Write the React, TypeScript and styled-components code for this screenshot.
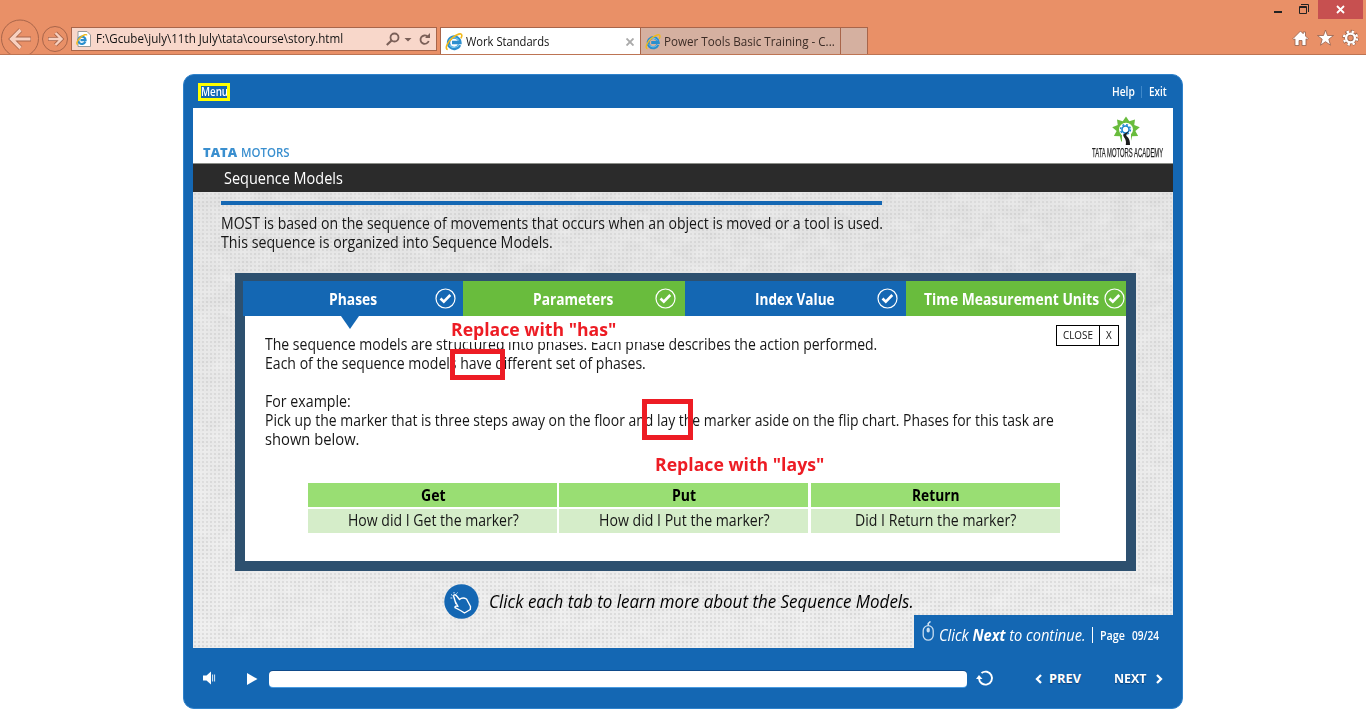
import React, { useLayoutEffect, useRef, useState } from "react";
import styled, { createGlobalStyle } from "styled-components";

const BLUE = "#1467b3";
const GREEN = "#69bc3d";
const RED = "#ed1c24";

const Global = createGlobalStyle`
  * { box-sizing: border-box; }
  body { margin: 0; background: #fff; font-family: "Open Sans", "Noto Sans", sans-serif; overflow: hidden; }
`;

/* ---- text fitted to a measured column width ---- */
const FitBox = styled.span<{ $w: number }>`
  display: block;
  flex: none;
  width: ${(p) => p.$w}px;
  white-space: pre;
`;
const FitInner = styled.span`
  display: inline-block;
  transform-origin: 0 50%;
`;
function Fit({ w, children }: { w: number; children: React.ReactNode }) {
  const ref = useRef<HTMLSpanElement>(null);
  const [k, setK] = useState(1);
  useLayoutEffect(() => {
    if (ref.current) setK(w / ref.current.offsetWidth);
  }, [w]);
  return (
    <FitBox $w={w}>
      <FitInner ref={ref} style={{ transform: `scaleX(${k})` }}>{children}</FitInner>
    </FitBox>
  );
}

/* ---- browser chrome ---- */
const Page = styled.div`
  width: 1366px;
  height: 728px;
  display: flex;
  flex-direction: column;
  align-items: center;
  background: #fff;
`;
const Chrome = styled.header`
  width: 100%;
  height: 55px;
  background: #e99067;
  border-bottom: 1px solid #bd7453;
  display: flex;
  align-items: flex-end;
  color: #111;
  font-size: 12.4px;
  overflow: hidden;
`;
const NavButtons = styled.svg`
  width: 71px;
  height: 54px;
  flex: none;
`;
const Address = styled.div`
  width: 366px;
  height: 24px;
  margin-bottom: 3px;
  background: #f8d7ca;
  border: 1px solid #a8654a;
  display: flex;
  align-items: center;
  padding-left: 4px;
  line-height: 22px;
`;
const AddressText = styled.div`
  margin: 0 0 0 5px;
  flex: 1;
`;
const AddressIcons = styled.svg`
  position: relative;
  left: -1px;
`;
const TabStrip = styled.div`
  height: 27px;
  margin-left: 3px;
  display: flex;
  border: 1px solid #a8654a;
  border-bottom: 0;
`;
const BrowserTab = styled.div<{ $w: number; $active?: boolean }>`
  width: ${(p) => p.$w}px;
  background: ${(p) => (p.$active ? "#fff" : "#d5b0a0")};
  color: ${(p) => (p.$active ? "#111" : "#3c2c26")};
  border-right: 1px solid #a8654a;
  display: flex;
  align-items: center;
  gap: 3px;
  padding: 1px 5px 0 4px;
  &:last-child { border-right: 0; }
`;
const TabClose = styled.svg`
  margin-left: auto;
  margin-right: 1px;
`;
const WindowSide = styled.div`
  margin-left: auto;
  width: 110px;
  height: 54px;
  display: flex;
  flex-direction: column;
  justify-content: space-between;
  align-items: flex-end;
`;
const WindowButtons = styled.div`
  display: flex;
  align-items: center;
  height: 19px;
  margin-right: 3px;
`;
const CloseWindow = styled.div`
  width: 45px;
  height: 19px;
  margin-left: 8px;
  background: #c75050;
  display: grid;
  place-items: center;
`;
const Tools = styled.div`
  display: flex;
  gap: 8px;
  margin: 0 7px 7px 0;
`;

const IELogo = ({ size = 18 }: { size?: number }) => (
  <svg width={size} height={size} viewBox="0 0 17 17">
    <path d="M13.7 11.3A5.4 5.4 0 1 1 14.1 9H6.6" fill="none" stroke="#2b8fce" strokeWidth="3.2" />
    <path d="M13.2 11.2A5.200 5.200 0 0 1 4.200 11M4 7.500a5 5 0 0 1 9-.5" fill="none" stroke="#7ccbf0" strokeWidth="1" />
    <path d="M2.600 15.600C-.6 15 2.200 8.800 7 4.600 11.200 1 15.600-.4 15.900 2.100c.1 1-.3 2-.9 3" fill="none" stroke="#f0b91c" strokeWidth="1.500" />
  </svg>
);

/* ---- course player ---- */
const Player = styled.main`
  width: 1000px;
  height: 635px;
  margin-top: 19px;
  background: ${BLUE};
  border: 1px solid #2f82cb;
  border-radius: 11px;
  padding: 0 9px;
`;
const PlayerTop = styled.div`
  height: 33px;
  padding: 0 6px 0 5px;
  display: flex;
  align-items: center;
  justify-content: space-between;
  color: #fff;
  font-size: 11.6px;
  font-weight: 600;
`;
const MenuMark = styled.div`
  width: 32px;
  height: 18px;
  border: 3px solid #ffff00;
  line-height: 12px;
  overflow: hidden;
`;
const TopLinks = styled.div`
  display: flex;
  align-items: center;
  gap: 7px;
`;
const LinkDivider = styled.i`
  width: 1px;
  height: 12px;
  margin-left: -1px;
  background: #3f88c9;
`;
const Slide = styled.section`
  height: 540px;
  display: flex;
  flex-direction: column;
  position: relative;
  background-color: #e7e7e7;
`;
const Texture = styled.svg`
  position: absolute;
  inset: 0;
`;
const BrandBar = styled.div`
  height: 56px;
  background: #fff;
  border-bottom: 1px solid #8b8d88;
  display: flex;
  justify-content: space-between;
  align-items: flex-end;
  padding: 0 10px 0 10px;
  position: relative;
`;
const Tata = styled.div`
  display: flex;
  gap: 4px;
  color: #3a8fcf;
  font-size: 12.6px;
  line-height: 14px;
  font-weight: 600;
  margin-bottom: 3px;
`;
const Heavy = styled.b`
  font-weight: 800;
`;
const Academy = styled.div`
  width: 71px;
  display: flex;
  flex-direction: column;
  align-items: center;
  color: #222;
  font-family: "Liberation Sans", sans-serif;
  font-size: 13.5px;
  line-height: 13px;
  margin-bottom: 4px;
  -webkit-text-stroke: 0.25px #222;
  svg { margin-right: 3px; }
`;
const TitleBar = styled.h1`
  height: 28px;
  margin: 0;
  padding-left: 31px;
  background: #2b2b2b;
  color: #fff;
  font-size: 15.7px;
  font-weight: 400;
  line-height: 29px;
  position: relative;
`;
const Intro = styled.div`
  margin: 9px 0 0 28px;
  width: 661px;
  border-top: 4px solid ${BLUE};
  padding-top: 9px;
  color: #161616;
  font-size: 15.7px;
  line-height: 19px;
  position: relative;
`;
const Panel = styled.div`
  width: 901px;
  height: 298px;
  margin: 21px 0 0 42px;
  border: 10px solid #2d506f;
  border-top-width: 8px;
  background: #fff;
  position: relative;
`;
const Tabs = styled.div`
  display: flex;
  margin-left: -2px;
  height: 35px;
`;
const Tab = styled.div<{ $w: number; $green?: boolean; $left: number; $check: number }>`
  width: ${(p) => p.$w}px;
  background: ${(p) => (p.$green ? GREEN : BLUE)};
  color: #fff;
  font-size: 15.3px;
  font-weight: 700;
  line-height: 36px;
  display: flex;
  justify-content: space-between;
  padding-left: ${(p) => p.$left}px;
  padding-right: ${(p) => p.$check}px;
  svg { margin-top: 6.5px; flex: none; }
`;
const Pointer = styled.svg`
  position: absolute;
  left: 96px;
  top: 35px;
`;
const Body = styled.div`
  padding: 19px 0 0 20px;
  color: #161616;
  font-size: 15.7px;
  line-height: 19px;
`;
const Gap = styled.div`
  height: 19px;
`;
const CloseBox = styled.div`
  position: absolute;
  right: 7px;
  top: 44px;
  height: 21px;
  display: flex;
  border: 1px solid #000;
  color: #111;
  font-size: 11.5px;
  line-height: 18px;
`;
const CloseCell = styled.div<{ $w: number; $pad: number }>`
  width: ${(p) => p.$w}px;
  padding-left: ${(p) => p.$pad}px;
  & + & { border-left: 1px solid #000; }
`;
const Grid = styled.div`
  display: grid;
  grid-template-columns: repeat(3, 249px);
  gap: 2px 2.4px;
  margin: 34px 0 0 43px;
`;
const Cell = styled.div<{ $head?: boolean }>`
  height: 24px;
  background: ${(p) => (p.$head ? "#99de73" : "#d5edc9")};
  color: ${(p) => (p.$head ? "#000" : "#161616")};
  font-weight: ${(p) => (p.$head ? 700 : 400)};
  font-size: ${(p) => (p.$head ? 15.2 : 15.7)}px;
  line-height: ${(p) => (p.$head ? 24 : 23)}px;
  display: flex;
  justify-content: center;
  padding-left: 1px;
`;
const Note = styled.div<{ $x: number; $y: number; $w: number; $h: number }>`
  position: absolute;
  left: ${(p) => p.$x}px;
  top: ${(p) => p.$y}px;
  width: ${(p) => p.$w}px;
  height: ${(p) => p.$h}px;
  padding-left: 1px;
  background: #fff;
  color: ${RED};
  font-size: 18.4px;
  line-height: 22px;
  font-weight: 700;
`;
const Mark = styled.div<{ $x: number; $y: number; $w: number; $h: number }>`
  position: absolute;
  left: ${(p) => p.$x}px;
  top: ${(p) => p.$y}px;
  width: ${(p) => p.$w}px;
  height: ${(p) => p.$h}px;
  border: 5px solid ${RED};
`;
const Hint = styled.div`
  display: flex;
  align-items: center;
  gap: 10px;
  margin: 12px 0 0 251px;
  height: 36px;
  font-size: 18.2px;
  font-style: italic;
  color: #000;
  position: relative;
`;
const NextHint = styled.div`
  position: absolute;
  right: 0;
  bottom: 0;
  width: 259px;
  height: 33px;
  background: ${BLUE};
  color: #fff;
  display: flex;
  align-items: center;
  padding-left: 8px;
`;
const NextText = styled.div`
  margin: 6px 0 0 4px;
  font-size: 16px;
  font-style: italic;
`;
const Bar = styled.i`
  width: 1px;
  height: 16px;
  margin: 7px 7px 0 6px;
  background: #fff;
`;
const PageNo = styled.div`
  display: flex;
  gap: 7px;
  font-size: 11.6px;
  font-weight: 600;
  margin-top: 8px;
`;
const Controls = styled.div`
  height: 60px;
  display: flex;
  align-items: center;
  color: #fff;
  font-size: 12.8px;
  font-weight: 700;
  padding: 0 9px 0 9px;
`;
const PlayIcon = styled.svg`
  margin: 1px 0 0 30px;
`;
const Seek = styled.div`
  width: 698px;
  height: 16px;
  margin: 2px 9px 0 11px;
  background: #fff;
  border-radius: 4px;
  box-shadow: 0 -1px 0 #0e4a8a, 0 1px 0 #4a9be0;
`;
const NavButton = styled.div<{ $gap: number; $left: number }>`
  display: flex;
  align-items: center;
  gap: ${(p) => p.$gap}px;
  margin-left: ${(p) => p.$left}px;
  text-shadow: 0 1px 1px #0b3f75;
  svg { margin-top: 2px; }
`;

const Check = () => (
  <svg width="21" height="21" viewBox="0 0 21 21">
    <circle cx="10.500" cy="10.500" r="9.500" fill="none" stroke="#fff" strokeWidth="1.200" />
    <path d="M5.500 10.500l3.300 3.200 6.500-6.700" fill="none" stroke="#fff" strokeWidth="2.600" />
  </svg>
);

const star = Array.from({ length: 18 }, (_, i) => {
  const r = i % 2 ? 0.68 : 1;
  const a = (i * Math.PI) / 9 - Math.PI / 2;
  return `${14 + 14 * r * Math.cos(a)},${13.5 + 13 * r * Math.sin(a)}`;
}).join(" ");

const AcademyLogo = () => (
  <svg width="28" height="30" viewBox="0 0 28 30">
    <polygon points={star} fill={GREEN} />
    <ellipse cx="14" cy="13.500" rx="7" ry="6.800" fill="#fff" />
    <path d="M10 18h9v12h-9z" fill="#fff" />
    <circle cx="13.500" cy="13.500" r="3.500" fill="none" stroke="#1c86d1" strokeWidth="1.600" />
    <circle cx="13.500" cy="13.500" r="4.900" fill="none" stroke="#1c86d1" strokeWidth="1.500" strokeDasharray="1.924 1.924" />
    <path d="M17.500 14.500c-2 2.500-6 2.500-6.300 5 .5 2.200 3.600 3.500 2.600 9.500h4.200c0-4-.7-6.500-3-8.500-1.800-1.700.8-3 2.500-6z" fill="#1c1c1c" />
  </svg>
);

const TABS = [
  { label: "Phases", w: 220, text: 48, left: 86, check: 7 },
  { label: "Parameters", w: 222, text: 80, left: 70, check: 9, green: true },
  { label: "Index Value", w: 221, text: 80, left: 70, check: 8 },
  { label: "Time Measurement Units", w: 220, text: 175, left: 18, check: 1, green: true },
];

export default function App() {
  return (
    <Page>
      <Global />
      <Chrome>
        <NavButtons viewBox="0 0 71 54">
          <g fill="none" stroke="#a8654a">
            <circle cx="20" cy="38.500" r="18.500" />
            <circle cx="55" cy="39" r="12.500" />
          </g>
          <g fill="none" stroke="#a8654a" strokeWidth="4.800">
            <path d="M31 39H12M20.500 30L11.500 39l9 9" />
            <path d="M48 39h13M55.500 33l6 6-6 6" strokeWidth="4" />
          </g>
          <g fill="none" stroke="#f8d0bf" strokeWidth="3.200">
            <path d="M30.500 39H12M20.500 30L11.500 39l9 9" />
            <path d="M48.500 39h12M55.500 33l6 6-6 6" strokeWidth="2.400" />
          </g>
        </NavButtons>
        <Address>
          <svg width="15" height="17" viewBox="0 0 15 17">
            <path d="M2 .5h9L14.500 4v11.500H2z" fill="#fff" stroke="#999" />
            <g transform="translate(0 3) scale(.68)">
              <path d="M13.700 11.300A5.400 5.400 0 1 1 14.100 9H6.600" fill="none" stroke="#2b8fce" strokeWidth="3.200" />
              <path d="M2.600 15.600C-.6 15 2.200 8.800 7 4.600 11.200 1 15.600-.4 15.900 2.100" fill="none" stroke="#f0b91c" strokeWidth="2" />
            </g>
          </svg>
          <AddressText><Fit w={247}>F:\Gcube\july\11th July\tata\course\story.html</Fit></AddressText>
          <AddressIcons width="50" height="16" viewBox="0 0 50 16">
            <g fill="none" stroke="#7b6058" strokeWidth="1.800">
              <circle cx="9.500" cy="6.500" r="4" />
              <path d="M6.500 9.500L1.800 14" strokeWidth="2.200" />
              <path d="M42.500 5.500A4.200 4.200 0 1 0 43.700 10" />
            </g>
            <path d="M19.500 7h7L23 10.500zM40 7h5V2z" fill="#7b6058" />
          </AddressIcons>
        </Address>
        <TabStrip>
          <BrowserTab $w={200} $active>
            <IELogo />
            <Fit w={83}>Work Standards</Fit>
            <TabClose width="8" height="8" viewBox="0 0 8 8"><path d="M.5.5l7 7m0-7l-7 7" stroke="#aaa" strokeWidth="1.900" /></TabClose>
          </BrowserTab>
          <BrowserTab $w={200}>
            <IELogo />
            <Fit w={171}>Power Tools Basic Training - C...</Fit>
          </BrowserTab>
          <BrowserTab $w={26} />
        </TabStrip>
        <WindowSide>
          <WindowButtons>
            <svg width="36" height="19" viewBox="0 0 36 19">
              <path d="M0 11h8v2H0z" fill="#222" />
              <path d="M25.500 6.500h7v7h-7z M25 7.500h8 M27 4.500h7.500V12" fill="none" stroke="#222" />
            </svg>
            <CloseWindow><svg width="9" height="9" viewBox="0 0 9 9"><path d="M1 1l7 7m0-7L1 8" stroke="#fff" strokeWidth="1.800" /></svg></CloseWindow>
          </WindowButtons>
          <Tools>
            <svg width="17" height="18" viewBox="0 0 17 18"><path d="M.8 9.800L8.500 2l2.700 2.700V3h2.300v4l2.800 2.800-1 1-1.300-1V16.500h-4V11.500H7v5H3V9.900l-1.200.9z" fill="#fff" stroke="#93604b" strokeWidth=".8" /></svg>
            <svg width="17" height="18" viewBox="0 0 17 18"><path d="M8.500 1l2 5.500h6l-4.700 3.700 1.700 6-5-3.500-5 3.500 1.700-6L.5 6.500h6z" fill="#fff" stroke="#93604b" strokeWidth=".8" /></svg>
            <svg width="17" height="18" viewBox="0 0 17 18">
              <circle cx="8.500" cy="9" r="6.700" fill="none" stroke="#93604b" strokeWidth="3" strokeDasharray="3.100 2.162" />
              <circle cx="8.500" cy="9" r="4.300" fill="none" stroke="#93604b" strokeWidth="3.800" />
              <circle cx="8.500" cy="9" r="6.500" fill="none" stroke="#fff" strokeWidth="2.400" strokeDasharray="2.300 2.805" strokeDashoffset="-.4" />
              <circle cx="8.500" cy="9" r="4.400" fill="none" stroke="#fff" strokeWidth="2.400" />
            </svg>
          </Tools>
        </WindowSide>
      </Chrome>

      <Player>
        <PlayerTop>
          <MenuMark><Fit w={27}>Menu</Fit></MenuMark>
          <TopLinks><Fit w={23}>Help</Fit><LinkDivider /><Fit w={18}>Exit</Fit></TopLinks>
        </PlayerTop>
        <Slide>
          <Texture width="980" height="540">
            <defs>
              <pattern id="weave" width="4" height="4" patternUnits="userSpaceOnUse">
                <rect x="1" y="1" width="2" height="2" fill="#c6c6c6" opacity=".5" />
              </pattern>
              <filter id="grain" x="0" y="0" width="100%" height="100%">
                <feTurbulence type="fractalNoise" baseFrequency=".05 .09" numOctaves="3" seed="4" />
                <feColorMatrix values="0 0 0 0 1  0 0 0 0 1  0 0 0 0 1  1.200 0 0 0 -.35" />
              </filter>
              <linearGradient id="shade" x2="0" y2="1">
                <stop offset="0" stopColor="#e0e0e0" />
                <stop offset="1" stopColor="#ececec" />
              </linearGradient>
            </defs>
            <rect width="980" height="540" fill="url(#shade)" />
            <rect width="980" height="540" fill="url(#weave)" />
            <rect width="980" height="540" filter="url(#grain)" opacity=".4" />
          </Texture>
          <BrandBar>
            <Tata><Fit w={34}><Heavy>TATA</Heavy></Fit><Fit w={49}>MOTORS</Fit></Tata>
            <Academy><AcademyLogo /><Fit w={71}>TATA MOTORS ACADEMY</Fit></Academy>
          </BrandBar>
          <TitleBar><Fit w={119}>Sequence Models</Fit></TitleBar>
          <Intro>
            <Fit w={662}>MOST is based on the sequence of movements that occurs when an object is moved or a tool is used.</Fit>
            <Fit w={332}>This sequence is organized into Sequence Models.</Fit>
          </Intro>
          <Panel>
            <Tabs>
              {TABS.map((t) => (
                <Tab key={t.label} $w={t.w} $green={t.green} $left={t.left} $check={t.check}>
                  <Fit w={t.text}>{t.label}</Fit>
                  <Check />
                </Tab>
              ))}
            </Tabs>
            <Pointer width="18" height="13"><path d="M0 0h18L9 13z" fill={BLUE} /></Pointer>
            <Body>
              <Fit w={612}>The sequence models are structured into phases. Each phase describes the action performed.</Fit>
              <Fit w={381}>Each of the sequence models have different set of phases.</Fit>
              <Gap />
              <Fit w={86}>For example:</Fit>
              <Fit w={789}>Pick up the marker that is three steps away on the floor and lay the marker aside on the flip chart. Phases for this task are</Fit>
              <Fit w={94}>shown below.</Fit>
              <Grid>
                <Cell $head><Fit w={25}>Get</Fit></Cell>
                <Cell $head><Fit w={24}>Put</Fit></Cell>
                <Cell $head><Fit w={47}>Return</Fit></Cell>
                <Cell><Fit w={171}>How did I Get the marker?</Fit></Cell>
                <Cell><Fit w={171}>How did I Put the marker?</Fit></Cell>
                <Cell><Fit w={161}>Did I Return the marker?</Fit></Cell>
              </Grid>
            </Body>
            <CloseBox>
              <CloseCell $w={42} $pad={6}><Fit w={30}>CLOSE</Fit></CloseCell>
              <CloseCell $w={19} $pad={6}><Fit w={6}>X</Fit></CloseCell>
            </CloseBox>
            <Note $x={205} $y={37} $w={214} $h={24}><Fit w={165}>Replace with "has"</Fit></Note>
            <Note $x={409} $y={172} $w={172} $h={24}><Fit w={169}>Replace with "lays"</Fit></Note>
            <Mark $x={205} $y={68} $w={55} $h={31} />
            <Mark $x={397} $y={118} $w={51} $h={41} />
          </Panel>
          <Hint>
            <svg width="35" height="35" viewBox="0 0 35 35">
              <circle cx="17.500" cy="17.500" r="17.200" fill={BLUE} />
              <path d="M12 20l-2-6.500c-1.500-2.300.8-3.700 2.300-2l3.200 4c2-1.800 5-1.600 7-.5l4 7.500-.2 3-5.800 3.500-4-2.500-5.500-2.800c-.5-1.500 1.500-2 3-1.200L11 17" fill="none" stroke="#fff" strokeWidth="1.400" strokeLinejoin="round" />
              <path d="M6.500 14h1.800M7 10.500l1.500 1M10 8v1.500M13.500 8.500l-1 1.200" stroke="#dceaf7" strokeWidth="1" />
            </svg>
            <Fit w={425}>Click each tab to learn more about the Sequence Models.</Fit>
          </Hint>
          <NextHint>
            <svg width="13" height="21" viewBox="0 0 13 21">
              <rect x="1.200" y="4.700" width="10" height="14.500" rx="5" fill="none" stroke="#c9def1" strokeWidth="1.300" />
              <path d="M6.200 4.500V2.500L8.500.5M6.200 8v3" fill="none" stroke="#dceaf7" strokeWidth="1.500" />
              <ellipse cx="6.200" cy="9" rx="1.700" ry="2.500" fill="#c9def1" />
            </svg>
            <NextText><Fit w={147}>Click <b>Next</b> to continue.</Fit></NextText>
            <Bar />
            <PageNo><Fit w={25}>Page</Fit><Fit w={27}>09/24</Fit></PageNo>
          </NextHint>
        </Slide>
        <Controls>
          <svg width="14" height="14" viewBox="0 0 14 14">
            <path d="M1 4.500h3.500L9 .5v13L4.500 9.500H1z" fill="#fff" />
            <path d="M10.600 3.500v7M12.600 3.500v7" stroke="#dceaf7" />
          </svg>
          <PlayIcon width="12" height="14" viewBox="0 0 12 14"><path d="M1 1l10.500 6L1 13z" fill="#fff" /></PlayIcon>
          <Seek />
          <svg width="18" height="18" viewBox="0 0 18 18">
            <path d="M3 9.500A6.500 6.500 0 1 0 5.500 4" fill="none" stroke="#fff" strokeWidth="1.900" />
            <path d="M0 10l3-4 3.500 4z" fill="#fff" />
          </svg>
          <NavButton $left={41} $gap={7}>
            <svg width="7" height="10" viewBox="0 0 7 10"><path d="M6 1L2 5l4 4" fill="none" stroke="#fff" strokeWidth="2.300" /></svg>
            <Fit w={32}>PREV</Fit>
          </NavButton>
          <NavButton $left={33} $gap={9}>
            <Fit w={33}>NEXT</Fit>
            <svg width="7" height="10" viewBox="0 0 7 10"><path d="M1 1l4 4-4 4" fill="none" stroke="#fff" strokeWidth="2.300" /></svg>
          </NavButton>
        </Controls>
      </Player>
    </Page>
  );
}
